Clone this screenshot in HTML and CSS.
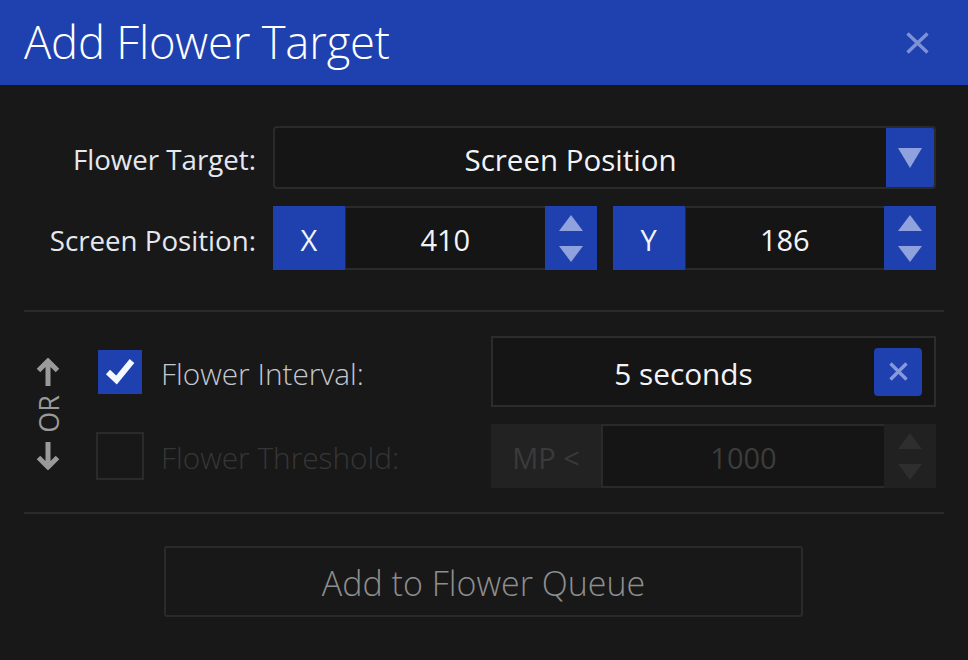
FILE: index.html
```html
<!DOCTYPE html>
<html lang="en">
<head>
<meta charset="utf-8">
<title>Add Flower Target</title>
<link rel="stylesheet" href="styles.css">
</head>
<body>
<div class="dialog">
  <header class="titlebar">
    <h1 class="title">Add Flower Target</h1>
    <button class="close" aria-label="Close">
      <svg width="23" height="22" viewBox="0 0 23 22"><path d="M1.5 1.5 L21.5 20.5 M21.5 1.5 L1.5 20.5" stroke="#7d92d6" stroke-width="3.4" fill="none"/></svg>
    </button>
  </header>

  <main class="content">
    <section class="form">
      <label class="lbl">Flower Target:</label>
      <div class="select">
        <span class="select-text">Screen Position</span>
        <span class="dd">
          <svg width="24" height="20" viewBox="0 0 24 20"><path d="M0 0 H24 L12 20 Z" fill="#8fa2dd"/></svg>
        </span>
      </div>

      <label class="lbl">Screen Position:</label>
      <div class="coords">
        <div class="coord">
          <span class="axis">X</span>
          <span class="val">410</span>
          <span class="spin">
            <svg width="24" height="16" viewBox="0 0 24 16"><path d="M12 0 L24 16 H0 Z" fill="#8fa2dd"/></svg>
            <svg width="24" height="16" viewBox="0 0 24 16"><path d="M0 0 H24 L12 16 Z" fill="#8fa2dd"/></svg>
          </span>
        </div>
        <div class="coord">
          <span class="axis">Y</span>
          <span class="val">186</span>
          <span class="spin">
            <svg width="24" height="16" viewBox="0 0 24 16"><path d="M12 0 L24 16 H0 Z" fill="#8fa2dd"/></svg>
            <svg width="24" height="16" viewBox="0 0 24 16"><path d="M0 0 H24 L12 16 Z" fill="#8fa2dd"/></svg>
          </span>
        </div>
      </div>
    </section>

    <hr class="divider">

    <section class="trigger">
      <div class="or">
        <svg width="24" height="28" viewBox="0 0 24 28"><path d="M12 28 V3 M2.5 12.5 L12 3 L21.5 12.5" stroke="#9a9a9a" stroke-width="5" fill="none"/></svg>
        <span class="or-text">OR</span>
        <svg width="24" height="28" viewBox="0 0 24 28"><path d="M12 0 V25 M2.5 15.5 L12 25 L21.5 15.5" stroke="#9a9a9a" stroke-width="5" fill="none"/></svg>
      </div>

      <span class="cb cb-on">
        <svg width="44" height="44" viewBox="0 0 44 44"><path d="M10 22 L18.5 30 L34 11" stroke="#f4f8ff" stroke-width="6" fill="none"/></svg>
      </span>
      <label class="opt">Flower Interval:</label>
      <div class="interval">
        <span class="interval-text">5 seconds</span>
        <button class="clear" aria-label="Clear">
          <svg width="19" height="19" viewBox="0 0 19 19"><path d="M1.5 1.5 L17.5 17.5 M17.5 1.5 L1.5 17.5" stroke="#8799d8" stroke-width="3.4" fill="none"/></svg>
        </button>
      </div>

      <span class="cb cb-off"></span>
      <label class="opt opt-off">Flower Threshold:</label>
      <div class="threshold">
        <span class="mp">MP &lt;</span>
        <span class="tval">1000</span>
        <span class="spin spin-off">
          <svg width="24" height="16" viewBox="0 0 24 16"><path d="M12 0 L24 16 H0 Z" fill="#2e2e2e"/></svg>
          <svg width="24" height="16" viewBox="0 0 24 16"><path d="M0 0 H24 L12 16 Z" fill="#2e2e2e"/></svg>
        </span>
      </div>
    </section>

    <hr class="divider divider-low">

    <div class="actions">
      <button class="add">Add to Flower Queue</button>
    </div>
  </main>
</div>
</body>
</html>
```

FILE: styles.css
```css
* { box-sizing: border-box; }

html, body {
  margin: 0;
  padding: 0;
  background: #181818;
}

body {
  font-family: "Open Sans", "Noto Sans", sans-serif;
  color: #e6e9f0;
}

.dialog {
  width: 968px;
  height: 660px;
  background: #181818;
  overflow: hidden;
}

.titlebar {
  height: 85px;
  background: #1f41b0;
  display: flex;
  align-items: center;
  justify-content: space-between;
  padding: 0 39px 0 24px;
}

.title {
  margin: 0;
  font-weight: 300;
  font-size: 45.4px;
  color: #ffffff;
  letter-spacing: -0.2px;
  line-height: 1;
  padding-bottom: 2px;
}

.close {
  background: none;
  border: 0;
  padding: 0;
  display: flex;
}

.content {
  padding: 41px 24px 0 24px;
}

.form {
  display: grid;
  grid-template-columns: 232px 1fr;
  grid-template-rows: 63px 64px;
  column-gap: 17px;
  row-gap: 17px;
  padding-right: 8px;
  align-items: stretch;
}

.lbl {
  justify-self: end;
  align-self: center;
  padding-top: 3px;
  font-size: 27.7px;
  color: #e4e8f0;
}

.select {
  display: flex;
  border: 2px solid #2a2a2a;
  border-radius: 4px;
  background: #151515;
  overflow: hidden;
}

.select-text {
  flex: 1;
  display: flex;
  align-items: center;
  justify-content: center;
  padding: 3px 20px 0 0;
  font-size: 29.5px;
  color: #f2f4f8;
}

.dd {
  width: 48px;
  background: #1f41b0;
  display: flex;
  align-items: center;
  justify-content: center;
}

.coords {
  display: flex;
  gap: 16px;
}

.coord {
  flex: 1;
  display: flex;
}

.axis {
  width: 72px;
  background: #1f41b0;
  display: flex;
  align-items: center;
  justify-content: center;
  padding-top: 3px;
  font-size: 29px;
  color: #f2f4f8;
}

.val {
  flex: 1;
  border: 2px solid #2a2a2a;
  border-left-width: 1px;
  border-right: 0;
  background: #151515;
  display: flex;
  align-items: center;
  justify-content: center;
  padding-top: 3px;
  font-size: 29px;
  color: #f2f4f8;
}

.spin {
  width: 52px;
  background: #1f41b0;
  display: flex;
  flex-direction: column;
  align-items: center;
  justify-content: space-between;
  padding: 9px 0 8px;
}

.divider {
  border: 0;
  height: 2px;
  background: #2a2a2a;
  margin: 40px 0 0;
}

.divider-low {
  margin-top: 24px;
}

.trigger {
  display: grid;
  grid-template-columns: 72px 48px 1fr 445px;
  grid-template-rows: 71px 64px;
  row-gap: 17px;
  padding-right: 8px;
  margin-top: 24px;
}

.or {
  grid-row: 1 / 3;
  grid-column: 1;
  display: flex;
  flex-direction: column;
  align-items: center;
  justify-content: center;
  gap: 9px;
  padding-right: 24px;
  padding-top: 4px;
}

.or-text {
  writing-mode: vertical-rl;
  transform: rotate(180deg);
  font-size: 27px;
  color: #9a9a9a;
  line-height: 27px;
}

.cb {
  align-self: center;
  justify-self: center;
  display: flex;
}

.cb-on {
  width: 44px;
  height: 44px;
  background: #1f41b0;
}

.cb-off {
  width: 48px;
  height: 48px;
  border: 2px solid #2a2a2a;
}

.opt {
  align-self: center;
  padding: 3px 0 0 17px;
  font-size: 29.8px;
  font-weight: 300;
  color: #c3c7ce;
}

.opt-off {
  color: #363636;
}

.interval {
  display: flex;
  align-items: center;
  border: 2px solid #2c2c2c;
  background: #151515;
  padding-right: 12px;
}

.interval-text {
  flex: 1;
  text-align: center;
  padding-top: 3px;
  font-size: 29.8px;
  color: #f2f4f8;
}

.clear {
  width: 48px;
  height: 48px;
  border: 0;
  border-radius: 4px;
  background: #1f41b0;
  display: flex;
  align-items: center;
  justify-content: center;
  padding: 0;
}

.threshold {
  display: flex;
}

.mp {
  width: 110px;
  background: #222222;
  display: flex;
  align-items: center;
  justify-content: center;
  padding-top: 3px;
  font-size: 29px;
  color: #3a3a3a;
}

.tval {
  flex: 1;
  border: 2px solid #2a2a2a;
  border-right: 0;
  background: #151515;
  display: flex;
  align-items: center;
  justify-content: center;
  padding-top: 3px;
  font-size: 29px;
  color: #3c3c3c;
}

.spin-off {
  background: #212121;
}

.actions {
  display: flex;
  justify-content: center;
  margin-top: 32px;
}

.add {
  width: 639px;
  height: 71px;
  background: transparent;
  border: 2px solid #2a2a2a;
  border-radius: 3px;
  padding-top: 3px;
  font-family: "Open Sans", "Noto Sans", sans-serif;
  font-weight: 300;
  font-size: 34px;
  color: #8e8e8e;
  margin-right: 1px;
}
```
